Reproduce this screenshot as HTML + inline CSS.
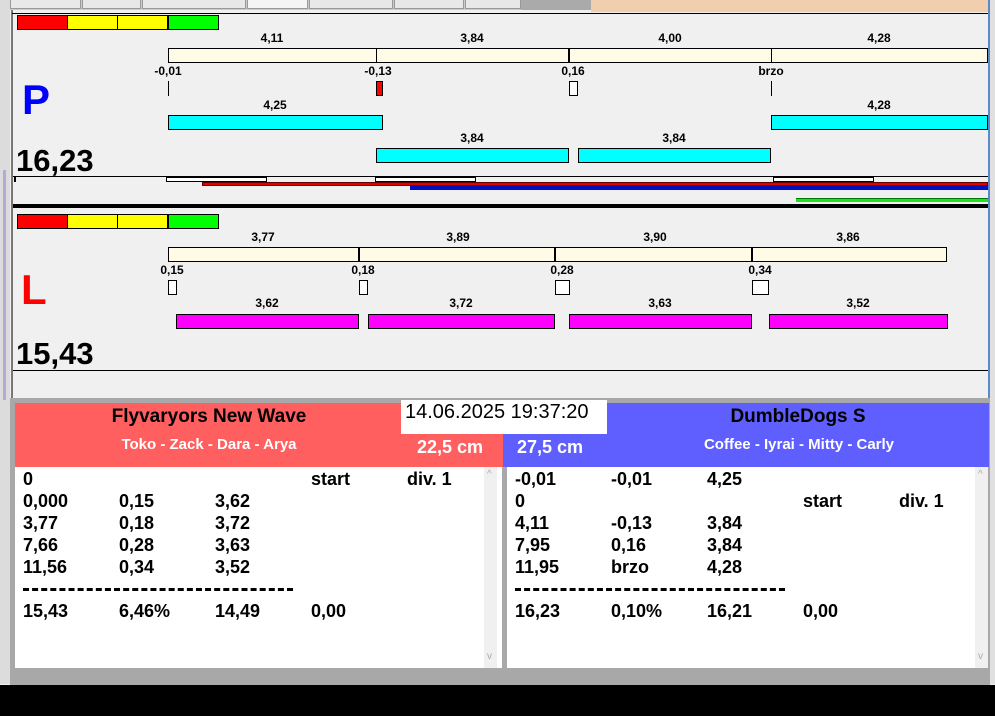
<!DOCTYPE html>
<html><head><meta charset="utf-8"><style>
*{margin:0;padding:0;box-sizing:border-box}
body{width:995px;height:716px;background:#f0f0f0;position:relative;overflow:hidden;font-family:"Liberation Sans",Arial,sans-serif}
div,span{position:absolute}
.t{font-weight:bold;font-size:12px;color:#000;transform:translateX(-50%);white-space:nowrap;line-height:14px}
.b{border:1px solid #000}
.y{background:#fffbe6}
.c{background:#00ffff}
.m{background:#ff00ff}
.w{background:#fff}
.tab{top:-4px;height:13px;background:#e8e8e8;border:1px solid #999;border-top:none}
.row{font-size:18px;font-weight:bold;line-height:22px;white-space:nowrap}
.sb{background:#f0f0f0;width:13px;color:#aaa;font-size:10px;text-align:center}
</style></head><body>
<div style="left:0;top:0;width:995px;height:10px;background:#ccc"></div>
<div class="tab" style="left:10px;width:71px"></div>
<div class="tab" style="left:82px;width:59px"></div>
<div class="tab" style="left:142px;width:104px"></div>
<div class="tab" style="left:247px;width:61px;background:#f5f5f5"></div>
<div class="tab" style="left:309px;width:84px"></div>
<div class="tab" style="left:394px;width:70px"></div>
<div class="tab" style="left:465px;width:56px"></div>
<div style="left:521px;top:0;width:70px;height:10px;background:#aaa"></div>
<div style="left:591px;top:0;width:397px;height:12px;background:#f1cfae"></div>
<div style="left:0;top:0;width:10px;height:684px;background:#dcdcdc"></div>
<div style="left:3px;top:170px;width:3px;height:230px;background:#b8a8d8"></div>
<div style="left:11px;top:10px;width:2px;height:390px;background:#777"></div>
<div style="left:12px;top:13px;width:977px;height:1px;background:#000"></div>
<div style="left:988px;top:0;width:2px;height:400px;background:#5a8ac8"></div>
<div style="left:990px;top:0;width:5px;height:684px;background:#e0e0e0"></div>

<div style="left:17px;top:15px;width:202px;height:15px;border:1px solid #000;background:#ff0000"></div>
<div style="left:67px;top:15px;width:51px;height:15px;border:1px solid #000;background:#ffff00"></div>
<div style="left:117px;top:15px;width:51px;height:15px;border:1px solid #000;background:#ffff00"></div>
<div style="left:168px;top:15px;width:51px;height:15px;border:1px solid #000;background:#00ff00"></div>

<span class="t" style="left:272px;top:31px">4,11</span>
<span class="t" style="left:472px;top:31px">3,84</span>
<span class="t" style="left:670px;top:31px">4,00</span>
<span class="t" style="left:879px;top:31px">4,28</span>
<div class="b y" style="left:168px;top:48px;width:820px;height:15px"></div>
<div style="left:376px;top:48px;width:1px;height:15px;background:#000"></div>
<div style="left:568px;top:48px;width:2px;height:15px;background:#000"></div>
<div style="left:771px;top:48px;width:1px;height:15px;background:#000"></div>
<span class="t" style="left:168px;top:64px">-0,01</span>
<span class="t" style="left:378px;top:64px">-0,13</span>
<span class="t" style="left:573px;top:64px">0,16</span>
<span class="t" style="left:771px;top:64px">brzo</span>
<div style="left:168px;top:81px;width:1px;height:15px;background:#000"></div>
<div class="b" style="left:376px;top:81px;width:7px;height:15px;background:#f00"></div>
<div class="b w" style="left:569px;top:81px;width:9px;height:15px"></div>
<div style="left:771px;top:81px;width:1px;height:15px;background:#000"></div>
<span class="t" style="left:275px;top:98px">4,25</span>
<span class="t" style="left:879px;top:98px">4,28</span>
<div class="b c" style="left:168px;top:115px;width:215px;height:15px"></div>
<div class="b c" style="left:771px;top:115px;width:217px;height:15px"></div>
<span class="t" style="left:472px;top:131px">3,84</span>
<span class="t" style="left:674px;top:131px">3,84</span>
<div class="b c" style="left:376px;top:148px;width:193px;height:15px"></div>
<div class="b c" style="left:578px;top:148px;width:193px;height:15px"></div>
<span style="left:22px;top:76px;font-size:42px;font-weight:bold;color:#0000ff;line-height:48px">P</span>
<span style="left:16px;top:144px;font-size:31px;font-weight:bold;line-height:34px">16,23</span>
<div style="left:13px;top:176px;width:975px;height:1px;background:#000"></div>
<div class="b w" style="left:14px;top:177px;width:1px;height:5px"></div>
<div class="b w" style="left:166px;top:177px;width:101px;height:5px"></div>
<div class="b w" style="left:375px;top:177px;width:101px;height:5px"></div>
<div class="b w" style="left:773px;top:177px;width:101px;height:5px"></div>
<div style="left:202px;top:182px;width:786px;height:4px;background:#e00000;border:1px solid #600"></div>
<div style="left:410px;top:186px;width:578px;height:4px;background:#0010c0"></div>
<div style="left:796px;top:198px;width:192px;height:4px;background:#20e020;border-top:1px solid #070"></div>
<div style="left:13px;top:204px;width:975px;height:4px;background:#000"></div>

<div style="left:17px;top:214px;width:202px;height:15px;border:1px solid #000;background:#ff0000"></div>
<div style="left:67px;top:214px;width:51px;height:15px;border:1px solid #000;background:#ffff00"></div>
<div style="left:117px;top:214px;width:51px;height:15px;border:1px solid #000;background:#ffff00"></div>
<div style="left:168px;top:214px;width:51px;height:15px;border:1px solid #000;background:#00ff00"></div>
<span class="t" style="left:263px;top:230px">3,77</span>
<span class="t" style="left:458px;top:230px">3,89</span>
<span class="t" style="left:655px;top:230px">3,90</span>
<span class="t" style="left:848px;top:230px">3,86</span>
<div class="b y" style="left:168px;top:247px;width:779px;height:15px"></div>
<div style="left:358px;top:247px;width:2px;height:15px;background:#000"></div>
<div style="left:554px;top:247px;width:2px;height:15px;background:#000"></div>
<div style="left:751px;top:247px;width:2px;height:15px;background:#000"></div>
<span class="t" style="left:172px;top:263px">0,15</span>
<span class="t" style="left:363px;top:263px">0,18</span>
<span class="t" style="left:562px;top:263px">0,28</span>
<span class="t" style="left:760px;top:263px">0,34</span>
<div class="b w" style="left:168px;top:280px;width:9px;height:15px"></div>
<div class="b w" style="left:359px;top:280px;width:9px;height:15px"></div>
<div class="b w" style="left:555px;top:280px;width:15px;height:15px"></div>
<div class="b w" style="left:752px;top:280px;width:17px;height:15px"></div>
<span class="t" style="left:267px;top:296px">3,62</span>
<span class="t" style="left:461px;top:296px">3,72</span>
<span class="t" style="left:660px;top:296px">3,63</span>
<span class="t" style="left:858px;top:296px">3,52</span>
<div class="b m" style="left:176px;top:314px;width:183px;height:15px"></div>
<div class="b m" style="left:368px;top:314px;width:187px;height:15px"></div>
<div class="b m" style="left:569px;top:314px;width:183px;height:15px"></div>
<div class="b m" style="left:769px;top:314px;width:179px;height:15px"></div>
<span style="left:21px;top:266px;font-size:42px;font-weight:bold;color:#ff0000;line-height:48px">L</span>
<span style="left:16px;top:337px;font-size:31px;font-weight:bold;line-height:34px">15,43</span>
<div style="left:13px;top:370px;width:975px;height:1px;background:#000"></div>

<div style="left:10px;top:398px;width:980px;height:287px;background:#a8a8a8"></div>
<div style="left:15px;top:403px;width:488px;height:64px;background:#ff5f5f"></div>
<div style="left:503px;top:403px;width:486px;height:64px;background:#5f5fff"></div>
<div style="left:401px;top:400px;width:206px;height:34px;background:#fff"></div>
<span style="left:405px;top:400px;font-size:20px;line-height:24px">14.06.2025 19:37:20</span>
<span style="left:209px;top:406px;transform:translateX(-50%);font-size:19px;font-weight:bold;line-height:22px;white-space:nowrap">Flyvaryors New Wave</span>
<span style="left:209px;top:436px;transform:translateX(-50%);font-size:15px;font-weight:bold;color:#fff;line-height:18px;white-space:nowrap">Toko - Zack - Dara - Arya</span>
<span style="left:417px;top:436px;font-size:18px;font-weight:bold;color:#fff;line-height:22px">22,5 cm</span>
<span style="left:517px;top:436px;font-size:18px;font-weight:bold;color:#fff;line-height:22px">27,5 cm</span>
<span style="left:798px;top:406px;transform:translateX(-50%);font-size:19px;font-weight:bold;line-height:22px;white-space:nowrap">DumbleDogs S</span>
<span style="left:799px;top:436px;transform:translateX(-50%);font-size:15px;font-weight:bold;color:#fff;line-height:18px;white-space:nowrap">Coffee - Iyrai - Mitty - Carly</span>

<div style="left:15px;top:467px;width:487px;height:201px;background:#fff"></div>
<div class="sb" style="left:484px;top:467px;height:201px"><span style="left:3px;top:2px">^</span><span style="left:3px;top:184px">v</span></div>
<div style="left:507px;top:467px;width:481px;height:201px;background:#fff"></div>
<div class="sb" style="left:975px;top:467px;height:201px"><span style="left:3px;top:2px">^</span><span style="left:3px;top:184px">v</span></div>

<div class="row" style="left:23px;top:468px">0</div><div class="row" style="left:311px;top:468px">start</div><div class="row" style="left:407px;top:468px">div. 1</div>
<div class="row" style="left:23px;top:490px">0,000</div><div class="row" style="left:119px;top:490px">0,15</div><div class="row" style="left:215px;top:490px">3,62</div>
<div class="row" style="left:23px;top:512px">3,77</div><div class="row" style="left:119px;top:512px">0,18</div><div class="row" style="left:215px;top:512px">3,72</div>
<div class="row" style="left:23px;top:534px">7,66</div><div class="row" style="left:119px;top:534px">0,28</div><div class="row" style="left:215px;top:534px">3,63</div>
<div class="row" style="left:23px;top:556px">11,56</div><div class="row" style="left:119px;top:556px">0,34</div><div class="row" style="left:215px;top:556px">3,52</div>
<div style="left:23px;top:588px;width:270px;height:3px;border-top:3px dashed #000"></div>
<div class="row" style="left:23px;top:600px">15,43</div><div class="row" style="left:119px;top:600px">6,46%</div><div class="row" style="left:215px;top:600px">14,49</div><div class="row" style="left:311px;top:600px">0,00</div>

<div class="row" style="left:515px;top:468px">-0,01</div><div class="row" style="left:611px;top:468px">-0,01</div><div class="row" style="left:707px;top:468px">4,25</div>
<div class="row" style="left:515px;top:490px">0</div><div class="row" style="left:803px;top:490px">start</div><div class="row" style="left:899px;top:490px">div. 1</div>
<div class="row" style="left:515px;top:512px">4,11</div><div class="row" style="left:611px;top:512px">-0,13</div><div class="row" style="left:707px;top:512px">3,84</div>
<div class="row" style="left:515px;top:534px">7,95</div><div class="row" style="left:611px;top:534px">0,16</div><div class="row" style="left:707px;top:534px">3,84</div>
<div class="row" style="left:515px;top:556px">11,95</div><div class="row" style="left:611px;top:556px">brzo</div><div class="row" style="left:707px;top:556px">4,28</div>
<div style="left:515px;top:588px;width:270px;height:3px;border-top:3px dashed #000"></div>
<div class="row" style="left:515px;top:600px">16,23</div><div class="row" style="left:611px;top:600px">0,10%</div><div class="row" style="left:707px;top:600px">16,21</div><div class="row" style="left:803px;top:600px">0,00</div>

<div style="left:0;top:685px;width:995px;height:31px;background:#000"></div>
</body></html>
